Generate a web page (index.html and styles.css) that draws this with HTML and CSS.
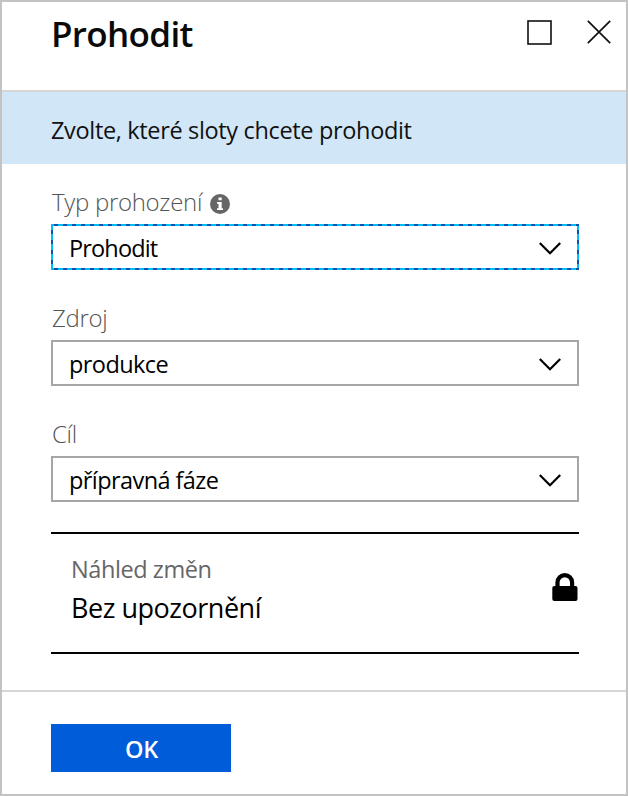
FILE: index.html
```html
<!DOCTYPE html>
<html lang="cs">
<head>
<meta charset="utf-8">
<title>Prohodit</title>
<link rel="stylesheet" href="styles.css">
</head>
<body>
<main class="blade">
  <header class="head">
    <h1 class="title"><span>Prohodit</span></h1>
    <div class="actions">
      <svg width="26" height="26" viewBox="0 0 26 26"><rect x="1" y="1" width="23" height="23" fill="none" stroke="#111" stroke-width="1.6"/></svg>
      <svg width="24" height="24" viewBox="0 0 24 24"><path d="M.8.8 23.2 23.2M23.2.8.8 23.2" stroke="#111" stroke-width="1.7"/></svg>
    </div>
  </header>
  <p class="banner"><span>Zvolte, které sloty chcete prohodit</span></p>
  <section class="form">
    <div class="field">
      <div class="label"><span>Typ prohození</span>
        <svg class="info" width="20" height="20" viewBox="0 0 20 20"><circle cx="10" cy="10" r="10" fill="#666"/><path d="M8.5 3.6h3.2v2.7H8.5zM7 8h4.7v6.3h1.3V16H7v-1.7h1.5V9.7H7z" fill="#fff"/></svg>
      </div>
      <div class="select focused"><span>Prohodit</span>
        <svg class="chevron" width="22" height="13" viewBox="0 0 22 13"><path d="M.8 1 11 11.2 21.2 1" fill="none" stroke="#000" stroke-width="2.2"/></svg></div>
    </div>
    <div class="field">
      <div class="label"><span>Zdroj</span></div>
      <div class="select"><span class="wider">produkce</span>
        <svg class="chevron" width="22" height="13" viewBox="0 0 22 13"><path d="M.8 1 11 11.2 21.2 1" fill="none" stroke="#000" stroke-width="2.2"/></svg></div>
    </div>
    <div class="field">
      <div class="label"><span>Cíl</span></div>
      <div class="select"><span class="wider">přípravná fáze</span>
        <svg class="chevron" width="22" height="13" viewBox="0 0 22 13"><path d="M.8 1 11 11.2 21.2 1" fill="none" stroke="#000" stroke-width="2.2"/></svg></div>
    </div>
    <div class="preview">
      <div>
        <div class="preview-label"><span>Náhled změn</span></div>
        <div class="preview-value"><span>Bez upozornění</span></div>
      </div>
      <svg class="lock" width="26" height="28" viewBox="0 0 26 28"><path d="M5.5 14V9.5a7.3 7.3 0 0 1 14.6 0V14" fill="none" stroke="#000" stroke-width="4.2"/><rect x="0.3" y="13" width="25.2" height="15" rx="2" fill="#000"/></svg>
    </div>
  </section>
  <footer class="foot"><button class="ok"><span>OK</span></button></footer>
</main>
</body>
</html>
```

FILE: styles.css
```css
* { box-sizing: border-box; }
body { margin: 0; background: #fff; font-family: "Open Sans", "Noto Sans", sans-serif; color: #111; }
.blade { width: 628px; height: 796px; border: 2px solid #c3c3c3; display: flex; flex-direction: column; }
.head { flex: none; height: 90px; border-bottom: 2px solid #d6d6d6; padding: 18px 15px 0 49px; display: flex; justify-content: space-between; }
.title { margin: 0; font-size: 35px; line-height: 28px; font-weight: 600; letter-spacing: -.65px; color: #0a0a0a; }
.actions { display: flex; gap: 34px; }
.banner { flex: none; margin: 0; height: 72px; background: #d1e6f7; padding-left: 49px; font-size: 23.5px; line-height: 76px; letter-spacing: -.34px; }
.form { flex: none; height: 526px; padding: 22px 47px 0 49px; }
.field { height: 116px; }
.label { height: 38px; padding-left: 1px; line-height: 31px; font-size: 24px; font-weight: 300; letter-spacing: -.3px; color: #555; display: flex; align-items: flex-start; }
.info { margin: 8px 0 0 8px; }
.select { height: 46px; border: 2px solid #a6a6a6; padding: 0 16px; display: flex; align-items: center; justify-content: space-between; font-size: 23.5px; line-height: 42px; letter-spacing: -.85px; color: #000; }
.wider { letter-spacing: -.58px; }
.chevron { margin-top: 3px; }
.select span { padding-top: 2px; }
.focused {
  border: 0; padding: 2px 18px;
  background:
    repeating-linear-gradient(90deg, #00bcf2 0 3px, #0f52ab 3px 7px, #00bcf2 7px 9px) 0 0 / 100% 2px no-repeat,
    repeating-linear-gradient(90deg, #00bcf2 0 3px, #0f52ab 3px 7px, #00bcf2 7px 9px) 0 100% / 100% 2px no-repeat,
    repeating-linear-gradient(180deg, #00bcf2 0 6px, #0f52ab 6px 10px) 0 0 / 2px 100% no-repeat,
    repeating-linear-gradient(180deg, #00bcf2 0 6px, #0f52ab 6px 10px) 100% 0 / 2px 100% no-repeat;
}
.preview { height: 122px; margin-top: -2px; padding: 19px 1px 0 20px; border: solid #000; border-width: 2px 0; display: flex; justify-content: space-between; }
.preview-label { font-size: 23.5px; line-height: 33px; letter-spacing: -.42px; color: #666; }
.preview-value { font-size: 27px; line-height: 44px; letter-spacing: -.47px; color: #000; }
.lock { margin-top: 20px; }
.foot { flex: 1; border-top: 2px solid #d6d6d6; padding: 32px 49px 0; }
.ok { display: block; width: 180px; height: 48px; border: 0; padding: 3px 0 0 1px; background: #015cda; color: #fff; font: 600 23.5px/45px "Open Sans", "Noto Sans", sans-serif; letter-spacing: -.3px; }
```
